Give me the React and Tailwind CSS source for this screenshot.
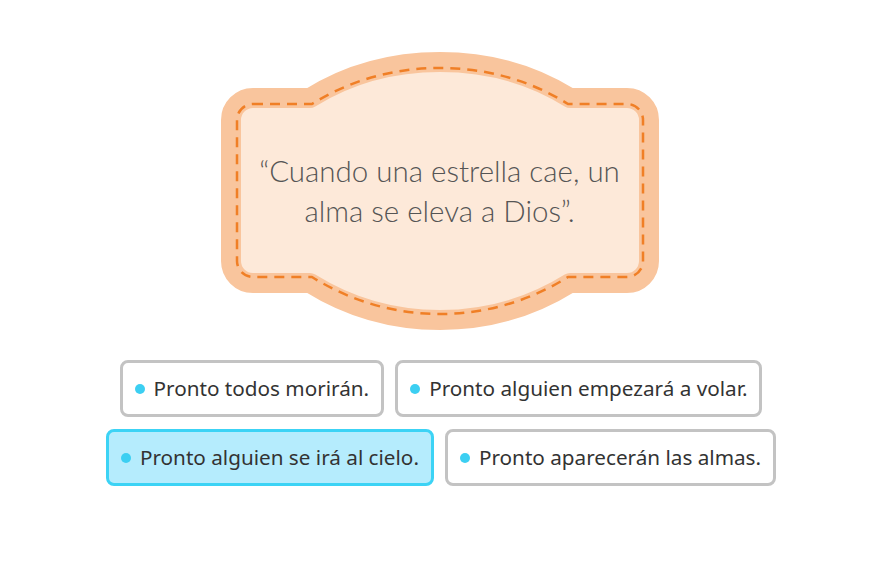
const options = [
  ["Pronto todos morirán.", "Pronto alguien empezará a volar."],
  ["Pronto alguien se irá al cielo.", "Pronto aparecerán las almas."],
];

const selected = "Pronto alguien se irá al cielo.";

const Badge = () => (
  <svg width="440" height="280" viewBox="0 0 440 280" className="absolute inset-0">
    <path
      d="M33 47 L90 47 C130 22 175 11 220 11 C265 11 310 22 350 47 L407 47 A22 22 0 0 1 429 69 L429 210 A22 22 0 0 1 407 232 L350 232 C310 257 265 269 220 269 C175 269 130 257 90 232 L33 232 A22 22 0 0 1 11 210 L11 69 A22 22 0 0 1 33 47 Z"
      fill="#fde9d9"
      stroke="#f9c59d"
      strokeWidth="20"
      strokeLinejoin="round"
    />
    <path
      d="M33 53 L92 53 C132 28 176 17 220 17 C264 17 308 28 348 53 L407 53 A16 16 0 0 1 423 69 L423 210 A16 16 0 0 1 407 226 L348 226 C308 251 264 263 220 263 C176 263 132 251 92 226 L33 226 A16 16 0 0 1 17 210 L17 69 A16 16 0 0 1 33 53 Z"
      fill="none"
      stroke="#f07f26"
      strokeWidth="2.5"
      strokeDasharray="10 7"
      strokeLinejoin="round"
    />
  </svg>
);

const Option = ({ text }) => {
  const active = text === selected;
  return (
    <button
      className={
        active
          ? "flex items-center gap-[9px] h-[57px] pl-3 pr-3 rounded-lg border-[3px] border-[#3cd3f5] bg-[#b5ecfd] text-[#333]"
          : "flex items-center gap-[9px] h-[57px] pl-3 pr-3 rounded-lg border-[3px] border-[#c3c3c3] bg-white text-[#333]"
      }
    >
      <span className="w-[10px] h-[10px] rounded-full bg-[#3ccff2]"></span>
      <span className="text-[20.7px] leading-none">{text}</span>
    </button>
  );
};

export default function App() {
  return (
    <div className="w-[882px] h-[576px] bg-white font-['Noto_Sans',sans-serif]">
      <div className="flex flex-col items-center pt-[51px]">
        <div className="relative w-[440px] h-[280px] ml-[-3px]">
          <Badge />
          <div className="absolute inset-0 flex items-center justify-center">
            <p className="w-[380px] text-center font-['Lato',sans-serif] font-light text-[29.5px] leading-[40px] text-[#555]">
              “Cuando una estrella cae, un alma se eleva a Dios”.
            </p>
          </div>
        </div>
        <div className="flex flex-col items-center gap-3 mt-[29px]">
          {options.map((row, i) => (
            <div key={i} className="flex gap-[11px]">
              {row.map((t) => (
                <Option key={t} text={t} />
              ))}
            </div>
          ))}
        </div>
      </div>
    </div>
  );
}
